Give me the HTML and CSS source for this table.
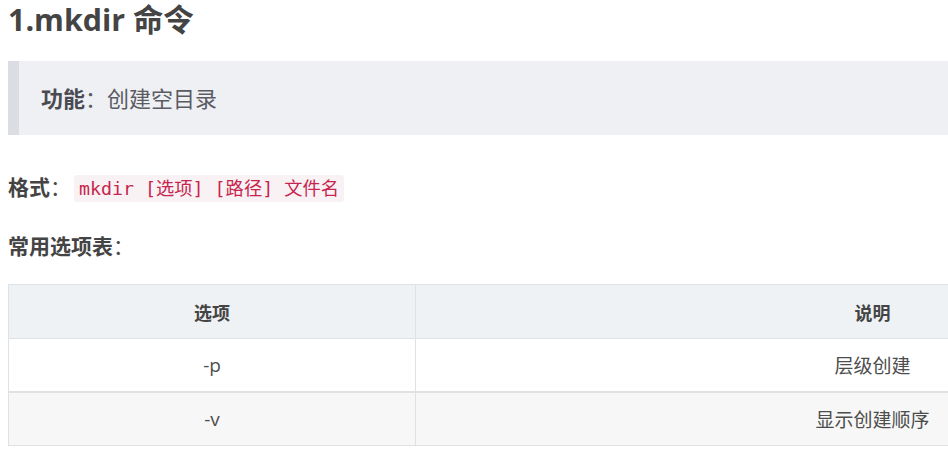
FILE: index.html
```html
<!DOCTYPE html>
<html lang="zh-CN">
<head>
<meta charset="utf-8">
<title>mkdir 命令</title>
<link rel="stylesheet" href="styles.css">
</head>
<body>
<article class="post">
  <h1 class="title">1.mkdir 命令</h1>
  <blockquote class="note"><strong>功能</strong>：创建空目录</blockquote>
  <p class="line"><strong>格式</strong>：<code class="code">mkdir [选项] [路径] 文件名</code></p>
  <p class="line line-tight"><strong>常用选项表</strong>：</p>
  <div class="table-wrap">
    <table class="opts">
      <thead>
        <tr><th class="c1">选项</th><th class="c2">说明</th></tr>
      </thead>
      <tbody>
        <tr><td>-p</td><td>层级创建</td></tr>
        <tr class="even"><td>-v</td><td>显示创建顺序</td></tr>
      </tbody>
    </table>
  </div>
</article>
</body>
</html>
```
FILE: styles.css
```css
html, body {
  margin: 0;
  padding: 0;
  background: #fff;
}
body {
  font-family: "Open Sans", "Noto Sans CJK SC", sans-serif;
  color: #4d4d4d;
  overflow: hidden;
}
.post {
  padding: 0 0 0 8px;
}
.title {
  margin: 0;
  font-size: 30.4px;
  line-height: 40px;
  font-weight: 700;
  color: #444;
}
.note {
  margin: 21px 0 0 0;
  padding: 22px 22px;
  border-left: 11px solid #dcdde2;
  background: #eef0f4;
  font-size: 22px;
  line-height: 30px;
  color: #5b5c63;
}
.note strong {
  color: #4a4b52;
}
.line {
  margin: 37px 0 0 0;
  font-size: 21px;
  line-height: 30px;
  color: #4d4d4d;
}
.line strong {
  color: #444;
}
.line-tight {
  margin-top: 27px;
}
.code {
  font-family: "DejaVu Sans Mono", "Noto Sans CJK SC", monospace;
  font-size: 18.3px;
  color: #c7254e;
  background: #f9f2f4;
  border-radius: 3px;
  padding: 3px 5px;
  margin-left: 3px;
}
.table-wrap {
  margin-top: 23px;
  width: 1400px;
}
.opts {
  border-collapse: collapse;
  width: 1322px;
  font-size: 19px;
  color: #4d4d4d;
}
.opts th, .opts td {
  border: 1px solid #dfe2e5;
  text-align: center;
  height: 52px;
  padding: 0 12px;
}
.opts th {
  background: #eff2f5;
  font-weight: 700;
  color: #444;
  font-size: 18px;
  height: 53px;
}
.opts .c1 {
  width: 382px;
}
.opts tr.even td {
  background: #f7f7f7;
  border-top: 2px solid #dfe2e5;
}
```
